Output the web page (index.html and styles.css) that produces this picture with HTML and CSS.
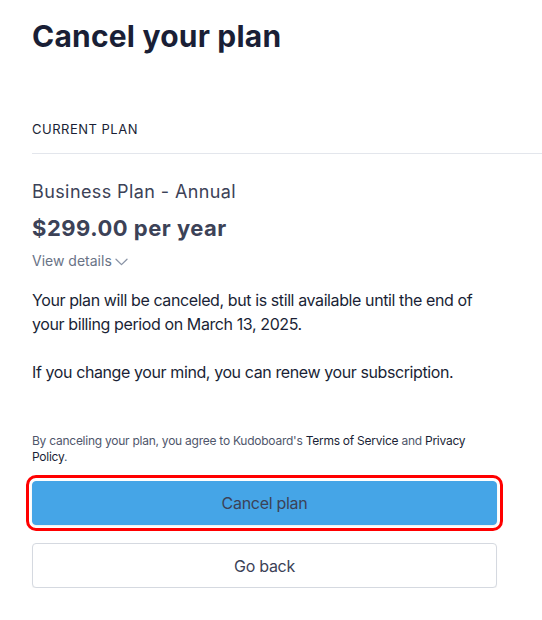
FILE: index.html
```html
<!DOCTYPE html>
<html lang="en">
<head>
<meta charset="utf-8">
<title>Cancel your plan</title>
<link rel="stylesheet" href="styles.css">
</head>
<body>
<main class="page">
  <h1 class="title">Cancel your plan</h1>
  <div class="section-head">
    <span class="section-label">CURRENT PLAN</span>
  </div>
  <div class="content">
    <div class="plan-name">Business Plan - Annual</div>
    <div class="plan-price">$299.00 per year</div>
    <button class="details-toggle" type="button">View details
      <svg class="chevron" width="13" height="8" viewBox="0 0 13 8" aria-hidden="true"><path d="M1 1.2 L6.5 6.6 L12 1.2" fill="none" stroke="#8a94a6" stroke-width="1.3" stroke-linecap="round" stroke-linejoin="round"/></svg>
    </button>
    <p class="notice">Your plan will be canceled, but is still available until the end of your billing period on March 13, 2025.</p>
    <p class="notice">If you change your mind, you can renew your subscription.</p>
    <p class="terms">By canceling your plan, you agree to Kudoboard's <a class="terms-link" href="#">Terms of Service</a> and <a class="terms-link" href="#">Privacy Policy</a>.</p>
    <div class="actions">
      <button class="btn btn-primary" type="button">Cancel plan</button>
      <button class="btn btn-secondary" type="button">Go back</button>
    </div>
  </div>
</main>
</body>
</html>
```
FILE: styles.css
```css
* { box-sizing: border-box; }

html, body {
  margin: 0;
  padding: 0;
  background: #ffffff;
}

body {
  font-family: Inter, "Noto Sans", "Liberation Sans", sans-serif;
  color: #1a1f36;
  -webkit-font-smoothing: antialiased;
}

.page {
  padding: 18px 0 0 32px;
}

.title {
  margin: 0;
  font-size: 30px;
  line-height: 36px;
  font-weight: 700;
  color: #1a1f36;
  letter-spacing: 0.2px;
}

.section-head {
  margin-top: 65px;
  padding-bottom: 14px;
  border-bottom: 1px solid #e3e6ec;
}

.section-label {
  display: block;
  font-size: 13px;
  line-height: 20px;
  color: #1a1f36;
  letter-spacing: 0.5px;
}

.content {
  width: 465px;
}

.plan-name {
  margin-top: 24px;
  font-size: 18px;
  line-height: 28px;
  color: #3c4257;
  letter-spacing: 0.4px;
}

.plan-price {
  margin-top: 7px;
  font-size: 22px;
  line-height: 30px;
  font-weight: 700;
  color: #3c4257;
  letter-spacing: 0.5px;
}

.details-toggle {
  display: flex;
  align-items: center;
  gap: 3px;
  margin-top: 8px;
  padding: 0;
  border: 0;
  background: none;
  font-family: inherit;
  font-size: 14px;
  line-height: 20px;
  color: #697386;
  cursor: pointer;
}

.chevron {
  display: block;
  margin-top: 1px;
}

.notice {
  margin: 17px 0 0;
  font-size: 16px;
  line-height: 24px;
  color: #1a1f36;
  letter-spacing: -0.4px;
}

.notice + .notice {
  margin-top: 24px;
}

.terms {
  margin: 49px 0 0;
  font-size: 12px;
  line-height: 16px;
  color: #4f566b;
  letter-spacing: -0.25px;
}

.terms-link {
  color: #1a1f36;
  text-decoration: none;
}

.actions {
  display: flex;
  flex-direction: column;
  gap: 18px;
  margin-top: 16px;
}

.btn {
  width: 100%;
  height: 44px;
  border-radius: 4px;
  font-family: inherit;
  font-size: 16px;
  line-height: 20px;
  color: #3c4257;
  letter-spacing: -0.3px;
  cursor: pointer;
}

.btn-primary {
  background: #45a5e7;
  border: 1px solid #45a5e7;
  box-shadow: 0 1px 2px rgba(0, 0, 0, 0.08);
  outline: 3px solid #ff0000;
  outline-offset: 3px;
}

.btn-secondary {
  height: 45px;
  background: #ffffff;
  border: 1px solid #d5d9e0;
  box-shadow: 0 1px 1px rgba(0, 0, 0, 0.05);
}
```
